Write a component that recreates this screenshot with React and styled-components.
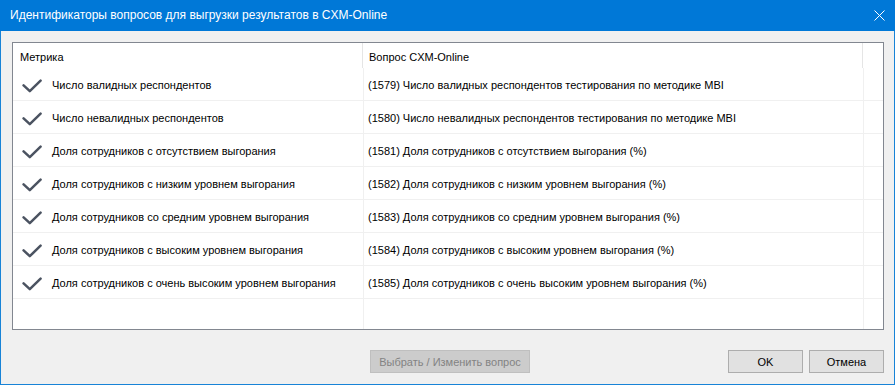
import React from 'react';
import styled, { createGlobalStyle } from 'styled-components';

const GlobalStyle = createGlobalStyle`
  html, body {
    margin: 0;
    padding: 0;
    background: #f0f0f0;
  }
  body {
    font-family: "Liberation Sans", Arial, sans-serif;
  }
`;

const Window = styled.div`
  width: 895px;
  height: 385px;
  display: flex;
  flex-direction: column;
  box-sizing: border-box;
  background: #f0f0f0;
`;

const TitleBar = styled.div`
  height: 31px;
  background: #0078d7;
  color: #fff;
  display: flex;
  align-items: center;
  justify-content: space-between;
  padding: 0 10px 0 10px;
  font-size: 12px;
  flex-shrink: 0;
`;

const TitleText = styled.span`
  padding-bottom: 1px;
`;

const CloseButton = styled.svg`
  width: 11px;
  height: 11px;
`;

const Body = styled.div`
  flex: 1;
  display: flex;
  flex-direction: column;
  border: 1px solid #1883d7;
  border-top: none;
  padding: 11px 10px 10px 11px;
  min-height: 0;
`;

const ListBox = styled.div`
  height: 288px;
  border: 1px solid #828790;
  background: #fff;
  display: flex;
  flex-direction: column;
  box-sizing: border-box;
  font-size: 11px;
  color: #000;
`;

const Row = styled.div`
  display: grid;
  grid-template-columns: ${p => (p.$header ? '350px 500px 1fr' : '351px 500px 1fr')};
  height: ${p => (p.$header ? '25px' : '33px')};
  box-sizing: border-box;
  border-bottom: ${p => (p.$header || p.$filler ? 'none' : '1px solid #f0f0f0')};
  flex: ${p => (p.$filler ? 1 : 'none')};
`;

const Cell = styled.div`
  display: flex;
  align-items: center;
  box-sizing: border-box;
  border-right: ${p => (p.$last ? 'none' : `1px solid ${p.$header ? '#e5e5e5' : '#f0f0f0'}`)};
  padding-left: ${p => p.$pad || 0}px;
  padding-top: ${p => (p.$header ? 3 : 2)}px;
  white-space: nowrap;
  overflow: hidden;
`;

const CheckIcon = styled.svg`
  width: 20px;
  height: 14px;
  margin-right: 10px;
  margin-top: 1px;
  flex-shrink: 0;
`;

const Footer = styled.div`
  display: flex;
  align-items: center;
  margin-top: 20px;
  padding-left: 358px;
`;

const Button = styled.button`
  height: 23px;
  width: ${p => p.$width || 75}px;
  box-sizing: border-box;
  font-family: "Liberation Sans", Arial, sans-serif;
  font-size: 11px;
  background: ${p => (p.disabled ? '#cccccc' : '#e1e1e1')};
  border: 1px solid ${p => (p.disabled ? '#bfbfbf' : '#adadad')};
  color: ${p => (p.disabled ? '#838383' : '#000')};
  margin-left: ${p => p.$ml || 0}px;
  padding: 0;
`;

const Spacer = styled.div`
  flex: 1;
`;

const rows = [
  ['Число валидных респондентов', '(1579) Число валидных респондентов тестирования по методике MBI'],
  ['Число невалидных респондентов', '(1580) Число невалидных респондентов тестирования по методике MBI'],
  ['Доля сотрудников с отсутствием выгорания', '(1581) Доля сотрудников с отсутствием выгорания (%)'],
  ['Доля сотрудников с низким уровнем выгорания', '(1582) Доля сотрудников с низким уровнем выгорания (%)'],
  ['Доля сотрудников со средним уровнем выгорания', '(1583) Доля сотрудников со средним уровнем выгорания (%)'],
  ['Доля сотрудников с высоким уровнем выгорания', '(1584) Доля сотрудников с высоким уровнем выгорания (%)'],
  ['Доля сотрудников с очень высоким уровнем выгорания', '(1585) Доля сотрудников с очень высоким уровнем выгорания (%)'],
];

const Check = () => (
  <CheckIcon viewBox="0 0 20 14">
    <path d="M1.6 6.4 L7.8 12.2 L18.6 1.6" fill="none" stroke="#4b5361" strokeWidth="2.5" strokeLinecap="round" strokeLinejoin="round" />
  </CheckIcon>
);

export default function App() {
  return (
    <>
      <GlobalStyle />
      <Window>
        <TitleBar>
          <TitleText>Идентификаторы вопросов для выгрузки результатов в CXM-Online</TitleText>
          <CloseButton viewBox="0 0 11 11">
            <path d="M0.5 0.5 L10.5 10.5 M10.5 0.5 L0.5 10.5" stroke="#fff" strokeWidth="1" fill="none" />
          </CloseButton>
        </TitleBar>
        <Body>
          <ListBox>
            <Row $header>
              <Cell $header $pad={7}>Метрика</Cell>
              <Cell $header $pad={6}>Вопрос CXM-Online</Cell>
              <Cell $header $last />
            </Row>
            {rows.map(([metric, question]) => (
              <Row key={metric}>
                <Cell $pad={9}>
                  <Check />
                  {metric}
                </Cell>
                <Cell $pad={4}>{question}</Cell>
                <Cell $last />
              </Row>
            ))}
            <Row $filler>
              <Cell />
              <Cell />
              <Cell $last />
            </Row>
          </ListBox>
          <Footer>
            <Button disabled $width={160}>Выбрать / Изменить вопрос</Button>
            <Spacer />
            <Button>OK</Button>
            <Button $ml={6}>Отмена</Button>
          </Footer>
        </Body>
      </Window>
    </>
  );
}
